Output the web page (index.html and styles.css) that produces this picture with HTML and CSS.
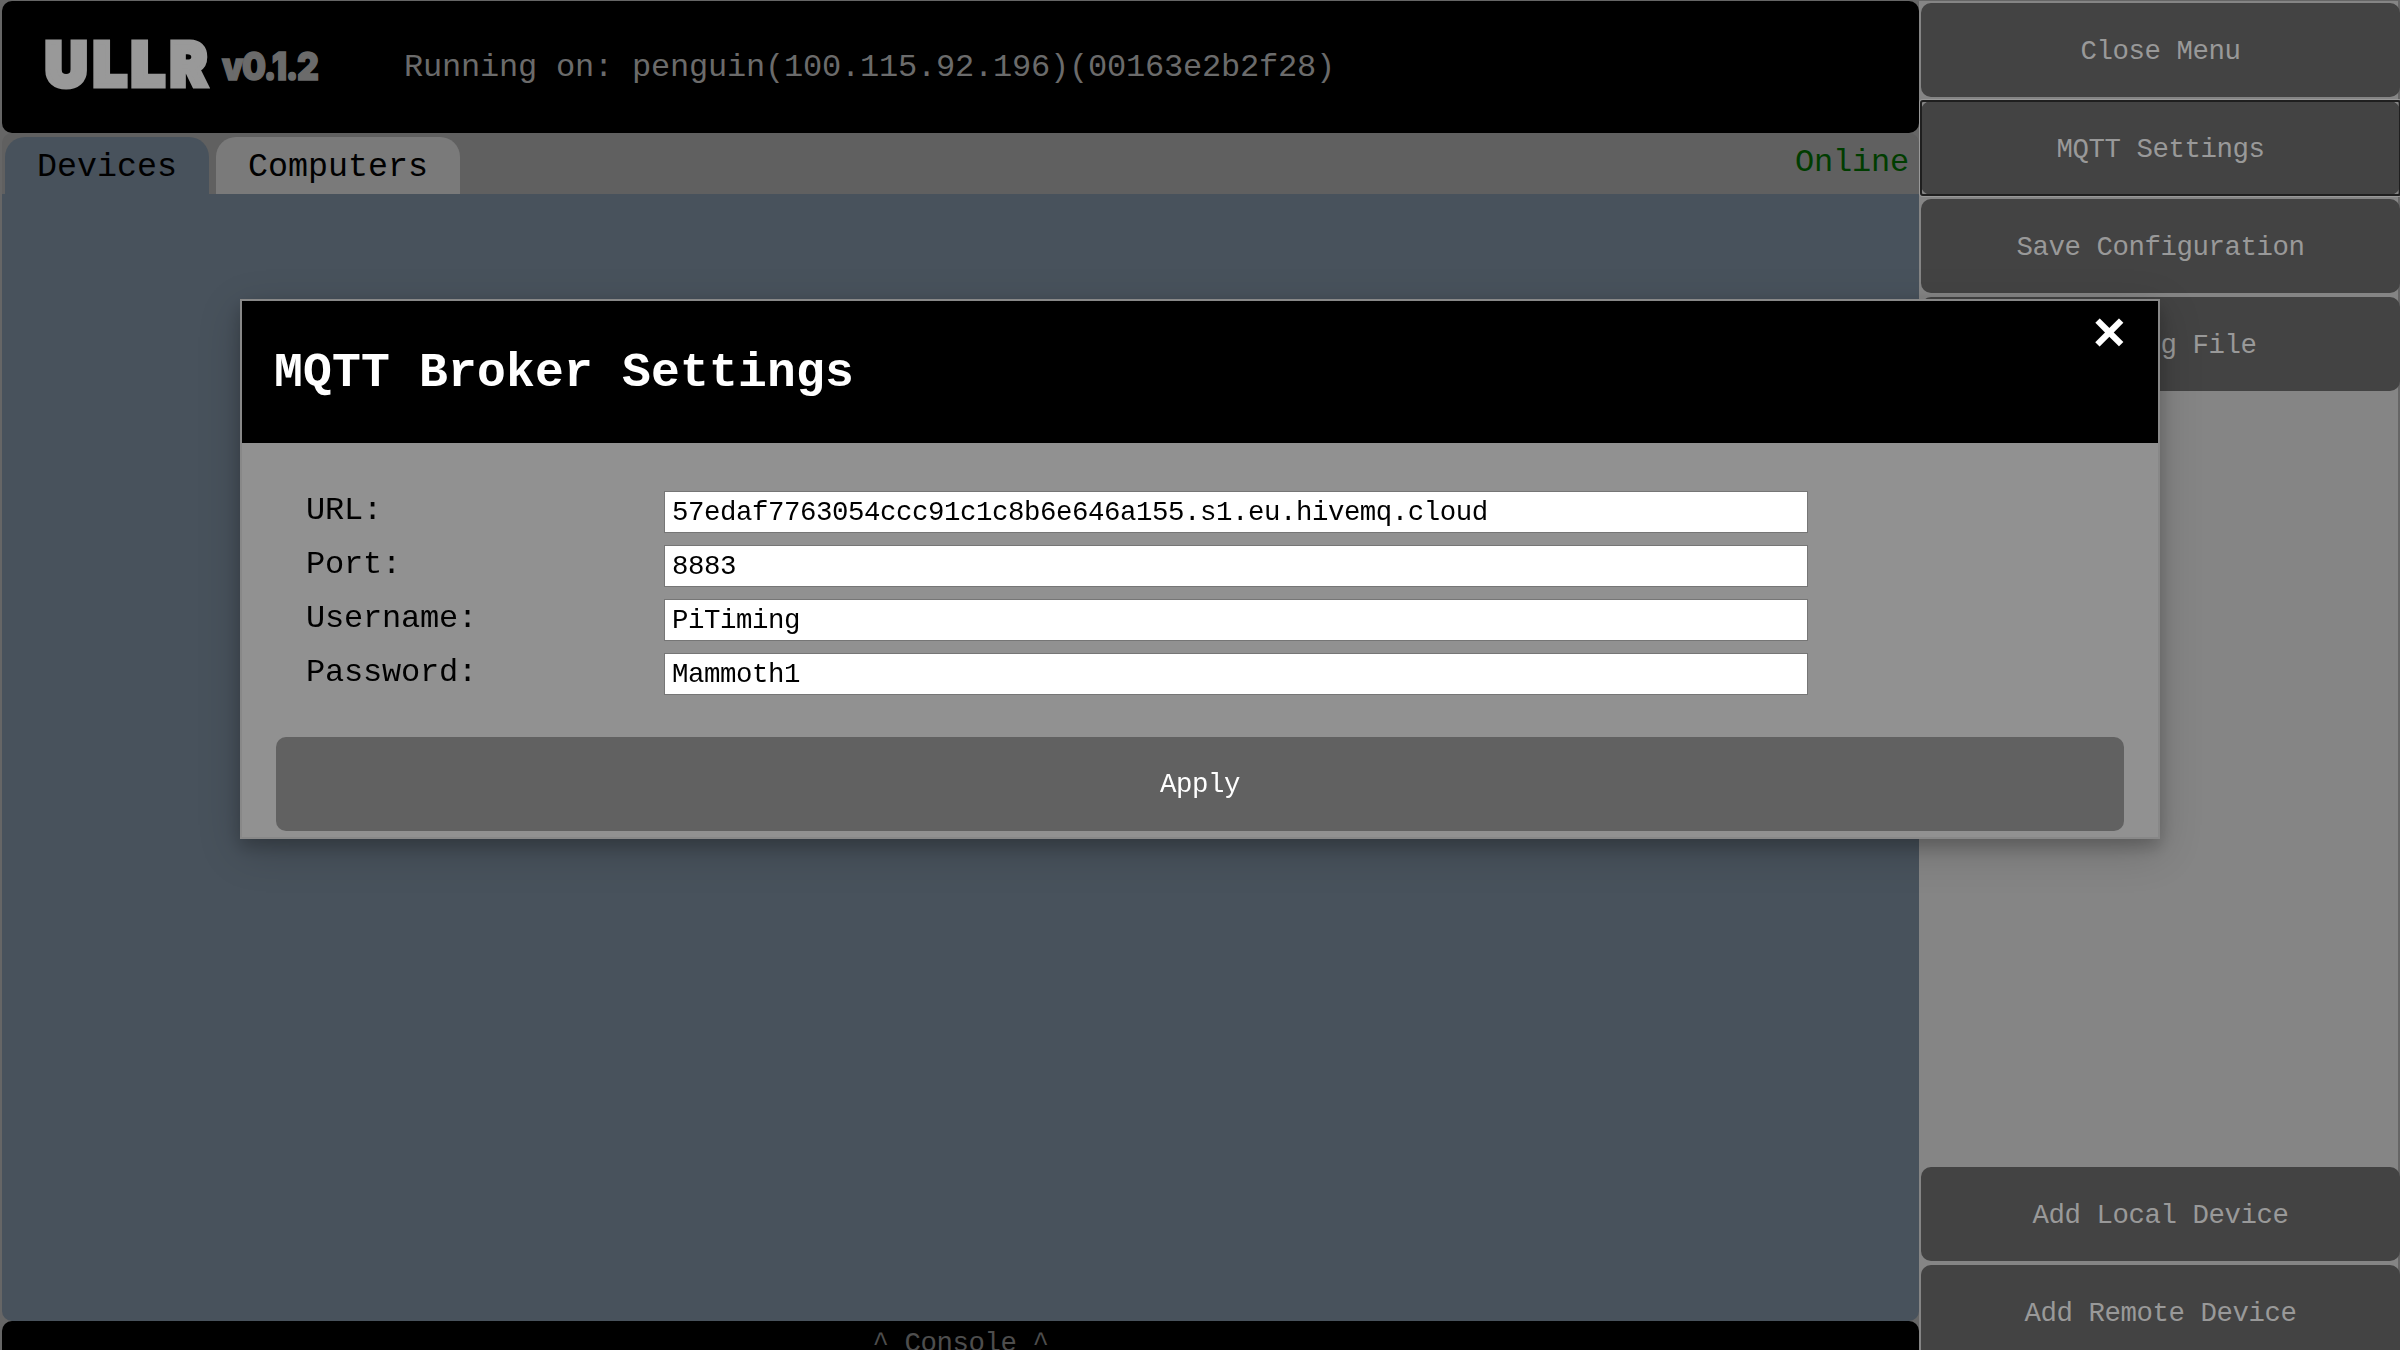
FILE: index.html
```html
<!DOCTYPE html>
<html lang="en">
<head>
<meta charset="utf-8">
<title>ULLR</title>
<link rel="stylesheet" href="styles.css">
</head>
<body>
<div class="app">
  <div class="main">
    <header class="header">
      <div class="logo"><span>U</span><span>L</span><span>L</span><span>R</span></div>
      <div class="version">v0.1.2</div>
      <div class="host">Running on: penguin(100.115.92.196)(00163e2b2f28)</div>
    </header>
    <nav class="tabs">
      <button class="tab active">Devices</button>
      <button class="tab">Computers</button>
      <span class="status">Online</span>
    </nav>
    <section class="content"></section>
    <footer class="console">^ Console ^</footer>
  </div>
  <aside class="menu">
    <button class="menu-button">Close Menu</button>
    <button class="menu-button focused">MQTT Settings</button>
    <button class="menu-button">Save Configuration</button>
    <button class="menu-button">Get Log File</button>
    <div class="spacer"></div>
    <button class="menu-button">Add Local Device</button>
    <button class="menu-button">Add Remote Device</button>
  </aside>
</div>
<div class="modal">
  <div class="dialog">
    <div class="dialog-header">
      <h2>MQTT Broker Settings</h2>
      <span class="close">&times;</span>
    </div>
    <form class="dialog-body">
      <div class="fields">
        <label>URL:</label><input type="text" value="57edaf7763054ccc91c1c8b6e646a155.s1.eu.hivemq.cloud">
        <label>Port:</label><input type="text" value="8883">
        <label>Username:</label><input type="text" value="PiTiming">
        <label>Password:</label><input type="text" value="Mammoth1">
      </div>
      <button type="button" class="apply">Apply</button>
    </form>
  </div>
</div>
</body>
</html>
```
FILE: styles.css
```css
* { box-sizing: border-box; }
html, body { height: 100%; }
body {
  margin: 0;
  overflow: hidden;
  background: #666;
  font-family: "Liberation Mono", monospace;
  font-size: 32px;
  letter-spacing: -.203px;
  color: #000;
}
button { border: 0; font-family: inherit; font-size: 27.4px; letter-spacing: -.44px; }

.app {
  display: flex;
  height: 1361px;
  padding: 1px 0 0 2px;
}
.main {
  display: flex;
  flex-direction: column;
  width: 1917px;
}
.header {
  display: flex;
  align-items: center;
  height: 132px;
  padding-left: 43px;
  background: #000;
  border-radius: 10px;
}
.logo {
  display: flex;
  width: 177px;
  margin-top: -6px;
  color: #999;
  font: 900 61px/80px Inter, sans-serif;
  letter-spacing: 0;
  -webkit-text-stroke: 5px #999;
}
.logo span { transform-origin: left; }
.logo span:nth-child(1) { width: 48px; transform: scaleX(.96); }
.logo span:nth-child(2) { width: 38px; transform: scaleX(.98); }
.logo span:nth-child(3) { width: 39px; transform: scaleX(.98); }
.logo span:nth-child(4) { transform: scaleX(.91); }
.version {
  width: 182px;
  margin-top: -3px;
  color: #6b6b6b;
  font: 900 38px/44px Inter, sans-serif;
  letter-spacing: -1.5px;
  -webkit-text-stroke: 1.5px #6b6b6b;
  transform: scaleX(.89);
  transform-origin: left;
}
.host { padding-top: 1px; color: #6b6b6b; }

.tabs {
  display: flex;
  align-items: flex-end;
  gap: 7px;
  height: 61px;
  padding-left: 3px;
  background: #606060;
  border-radius: 10px 10px 0 0;
}
.tab {
  height: 57px;
  padding: 2px 32px 0;
  font-size: 33.333px;
  letter-spacing: 0;
  color: #000;
  background: #7a7a7a;
  border-radius: 20px 20px 0 0;
}
.tab.active { background: #48525c; }
.status {
  margin-left: auto;
  align-self: flex-start;
  padding: 11px 10px 0 0;
  color: #003d00;
}
.content {
  height: 1127px;
  background: #48525c;
  border-radius: 0 0 10px 10px;
}
.console {
  flex: 1;
  padding-top: 7px;
  background: #000;
  border-radius: 10px 10px 0 0;
  color: #4d4d4d;
  font-size: 27.4px;
  letter-spacing: -.44px;
  text-align: center;
}

.menu {
  display: flex;
  flex-direction: column;
  gap: 4px;
  width: 479px;
  padding: 2px 0 2px 2px;
  background: linear-gradient(90deg, #858585 479px, #666 0);
}
.menu-button {
  flex: none;
  width: 479px;
  height: 94px;
  padding: 2px 6px 0;
  background: #434343;
  color: #999;
  border-radius: 10px;
}
.focused { position: relative; }
.focused::after {
  content: "";
  position: absolute;
  inset: -1px;
  border: 2px solid #1f1f1f;
  border-radius: 3px;
  box-shadow: 0 0 0 1px #999;
}
.spacer { flex: 1; }

.modal {
  position: fixed;
  inset: 0;
  padding-top: 299px;
}
.dialog {
  width: 1920px;
  height: 540px;
  margin: 0 auto;
  background: #919191;
  border: 2px solid #888;
  box-shadow: 0 8px 16px rgba(0, 0, 0, .2), 0 12px 40px rgba(0, 0, 0, .19);
}
.dialog-header {
  display: flex;
  justify-content: space-between;
  height: 142px;
  padding: 0 32px;
  background: #000;
  color: #fff;
}
h2 { margin: 45px 0 0; font-size: 48px; line-height: 54px; letter-spacing: .193px; }
.close { margin-top: 3px; font-size: 56px; font-weight: bold; line-height: 64px; }
.dialog-body { padding: 48px 34px 0; }
.fields {
  display: grid;
  grid-template-columns: 358px 1144px;
  row-gap: 12px;
  padding-left: 30px;
}
.fields label { line-height: 39px; }
.fields input {
  height: 42px;
  margin: 0;
  padding: 3px 7px 2px;
  border: 1px solid #767676;
  border-radius: 0;
  background: #fff;
  color: #000;
  font: 27.4px "Liberation Mono", monospace;
  letter-spacing: -.44px;
}
.apply {
  display: block;
  width: 1848px;
  height: 94px;
  margin-top: 42px;
  padding-top: 2px;
  background: #616161;
  color: #fff;
  border-radius: 10px;
}
```
